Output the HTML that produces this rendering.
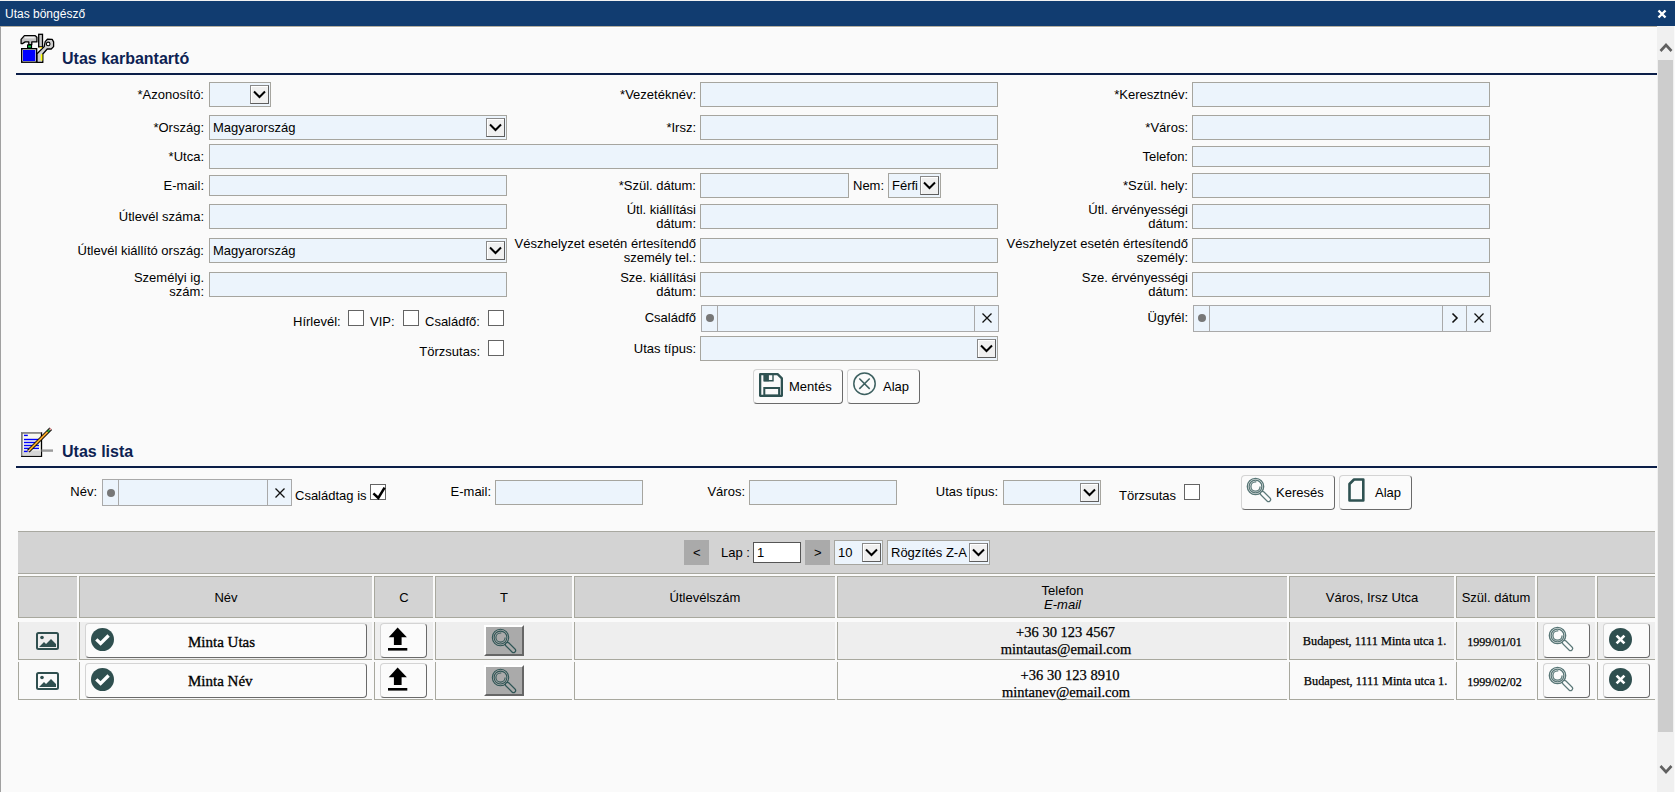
<!DOCTYPE html><html><head><meta charset="utf-8"><title>Utas böngésző</title><style>
*{margin:0;padding:0;box-sizing:border-box}
html,body{width:1675px;height:792px;overflow:hidden;background:#fafafa;font-family:'Liberation Sans', sans-serif;color:#000}
div{position:absolute}
.lb{font-size:13px;line-height:14px;text-align:right;white-space:nowrap}
.tx{font-size:13px;line-height:14px;white-space:nowrap}
.in{border:1px solid #a6a59f;background:#ecf4fc}
.sel .sv{position:absolute;left:3px;top:50%;margin-top:-7px;font-size:13px;line-height:14px}
.ab{right:1px;top:2px;border:1px solid;border-color:#8a8a8a #5e5e5e #5e5e5e #8a8a8a;background:#f0f0f0;box-shadow:inset 1px 1px 0 #fff}
.cb{width:16px;height:16px;border:1px solid #646464;background:#fff}
.lk-dot{left:4px;width:8px;height:8px;border-radius:50%;background:#777}
.lk-sep{top:0;bottom:0;width:1px;background:#a9a9a9}
.btn{border:1px solid;border-color:#d4d4d4 #6a6a6a #6a6a6a #d4d4d4;border-radius:4px;background:#fbfbfb}
.th{background:#d3d3d3;border:1px solid #a8a89e;border-right:none;padding-top:1px;font-size:13px;line-height:14px;text-align:center;display:flex;align-items:center;justify-content:center;flex-direction:column}
.td{border-left:1px solid #a8a89e;border-bottom:1px solid #a8a89e;font-family:'Liberation Serif', serif;-webkit-text-stroke:0.25px #000;text-align:center;display:flex;align-items:center;justify-content:center;flex-direction:column}
</style></head><body>
<div class="" style="left:0px;top:0px;width:1675px;height:1px;background:#f2f2f2"></div>
<div class="" style="left:0px;top:1px;width:1675px;height:25px;background:#113c70"></div>
<div style="left:5px;top:7px;font-size:12px;line-height:14px;color:#fff">Utas böngésző</div>
<svg style="position:absolute;left:1657px;top:9px" width="10" height="10" viewBox="0 0 10 10"><path d="M1.5 1.5 L8.5 8.5 M8.5 1.5 L1.5 8.5" stroke="#fff" stroke-width="2.4"/></svg>
<div class="" style="left:0px;top:26px;width:1657px;height:1px;background:#b4ae9f"></div>
<div class="" style="left:1px;top:27px;width:1656px;height:1px;background:#ffffff"></div>
<div class="" style="left:0px;top:26px;width:1px;height:766px;background:#a0a0a0"></div>
<div class="" style="left:1657px;top:26px;width:17px;height:766px;background:#f0f0f0"></div>
<div class="" style="left:1658px;top:60px;width:15px;height:672px;background:#cdcdcd"></div>
<svg style="position:absolute;left:1659px;top:41px" width="14" height="12" viewBox="0 0 14 12"><path d="M1.5 10 L7 4 L12.5 10" fill="none" stroke="#606060" stroke-width="2.6"/></svg>
<svg style="position:absolute;left:1659px;top:764px" width="14" height="12" viewBox="0 0 14 12"><path d="M1.5 2 L7 8 L12.5 2" fill="none" stroke="#606060" stroke-width="2.6"/></svg>
<svg style="position:absolute;left:20px;top:33px" width="36" height="32" viewBox="0 0 36 32">
<path d="M4.4 2.6 H15.2 L16.9 4.3 V8.9 H11.8 V11.6 H8.8 V8.9 H5.2 L2.4 10.6 H1.1 V6.4 Z" fill="#c4c4c4" stroke="#000" stroke-width="1.3" stroke-linejoin="round"/>
<rect x="4.6" y="3.8" width="10" height="1.6" fill="#efefef"/>
<rect x="7.6" y="12" width="3.9" height="3" fill="#00e040" stroke="#000" stroke-width="1.2"/>
<rect x="1.7" y="15.7" width="14.9" height="13.5" fill="#fff" stroke="#000" stroke-width="1.4"/>
<rect x="3" y="17" width="12.3" height="11" fill="#0000ff"/>
<path d="M17 29.4 V20.8 L24.2 13.6 L25.2 8.6 L27.4 6.2 L32.2 6.4 L33.6 8.8 V13.6 L31.2 16 L27.2 16 L22.8 21 V29.4 Z" fill="#d0d0d0" stroke="#000" stroke-width="1.3" stroke-linejoin="round"/>
<rect x="18.7" y="1.3" width="3.8" height="12.6" fill="#c8c8c8" stroke="#000" stroke-width="1.3"/>
<rect x="19.6" y="14" width="2.2" height="1.4" fill="#ffe000"/>
<circle cx="28.2" cy="10.9" r="1.8" fill="#fff" stroke="#000" stroke-width="1.1"/>
<rect x="20.8" y="21.2" width="1.6" height="6.4" fill="#ffff00"/>
</svg>
<div style="left:62px;top:50px;font-size:16px;line-height:18px;font-weight:bold;color:#0d2252">Utas karbantartó</div>
<div class="" style="left:16px;top:73px;width:1641px;height:2px;background:#0b1e48"></div>
<div class="lb" style="left:-96px;width:300px;top:87.5px;">*Azonosító:</div>
<div class="in sel" style="left:209px;top:82px;width:62px;height:25px;"><span class="sv"></span><div class="ab" style="width:19px;height:19px"><svg width="13" height="9" viewBox="0 0 13 9" style="position:absolute;left:2px;top:4px"><path d="M1 1.5 L6.5 7 L12 1.5" fill="none" stroke="#000" stroke-width="2"/></svg></div></div>
<div class="lb" style="left:396px;width:300px;top:87.5px;">*Vezetéknév:</div>
<div class="in" style="left:700px;top:82px;width:298px;height:25px;"></div>
<div class="lb" style="left:888px;width:300px;top:87.5px;">*Keresztnév:</div>
<div class="in" style="left:1192px;top:82px;width:298px;height:25px;"></div>
<div class="lb" style="left:-96px;width:300px;top:120.5px;">*Ország:</div>
<div class="in sel" style="left:209px;top:115px;width:298px;height:25px;"><span class="sv">Magyarország</span><div class="ab" style="width:19px;height:19px"><svg width="13" height="9" viewBox="0 0 13 9" style="position:absolute;left:2px;top:4px"><path d="M1 1.5 L6.5 7 L12 1.5" fill="none" stroke="#000" stroke-width="2"/></svg></div></div>
<div class="lb" style="left:396px;width:300px;top:120.5px;">*Irsz:</div>
<div class="in" style="left:700px;top:115px;width:298px;height:25px;"></div>
<div class="lb" style="left:888px;width:300px;top:120.5px;">*Város:</div>
<div class="in" style="left:1192px;top:115px;width:298px;height:25px;"></div>
<div class="lb" style="left:-96px;width:300px;top:149.5px;">*Utca:</div>
<div class="in" style="left:209px;top:144px;width:789px;height:25px;"></div>
<div class="lb" style="left:888px;width:300px;top:149.5px;">Telefon:</div>
<div class="in" style="left:1192px;top:146px;width:298px;height:21px;"></div>
<div class="lb" style="left:-96px;width:300px;top:178.5px;">E-mail:</div>
<div class="in" style="left:209px;top:175px;width:298px;height:21px;"></div>
<div class="lb" style="left:396px;width:300px;top:178.5px;">*Szül. dátum:</div>
<div class="in" style="left:700px;top:173px;width:149px;height:25px;"></div>
<div class="tx" style="left:853px;top:179px;">Nem:</div>
<div class="in sel" style="left:888px;top:173px;width:53px;height:25px;"><span class="sv">Férfi</span><div class="ab" style="width:19px;height:19px"><svg width="13" height="9" viewBox="0 0 13 9" style="position:absolute;left:2px;top:4px"><path d="M1 1.5 L6.5 7 L12 1.5" fill="none" stroke="#000" stroke-width="2"/></svg></div></div>
<div class="lb" style="left:888px;width:300px;top:178.5px;">*Szül. hely:</div>
<div class="in" style="left:1192px;top:173px;width:298px;height:25px;"></div>
<div class="lb" style="left:-96px;width:300px;top:209.5px;">Útlevél száma:</div>
<div class="in" style="left:209px;top:204px;width:298px;height:25px;"></div>
<div class="lb" style="left:396px;width:300px;top:203.0px;">Útl. kiállítási<br>dátum:</div>
<div class="in" style="left:700px;top:204px;width:298px;height:25px;"></div>
<div class="lb" style="left:888px;width:300px;top:203.0px;">Útl. érvényességi<br>dátum:</div>
<div class="in" style="left:1192px;top:204px;width:298px;height:25px;"></div>
<div class="lb" style="left:-96px;width:300px;top:243.5px;">Útlevél kiállító ország:</div>
<div class="in sel" style="left:209px;top:238px;width:298px;height:25px;"><span class="sv">Magyarország</span><div class="ab" style="width:19px;height:19px"><svg width="13" height="9" viewBox="0 0 13 9" style="position:absolute;left:2px;top:4px"><path d="M1 1.5 L6.5 7 L12 1.5" fill="none" stroke="#000" stroke-width="2"/></svg></div></div>
<div class="lb" style="left:396px;width:300px;top:237.0px;">Vészhelyzet esetén értesítendő<br>személy tel.:</div>
<div class="in" style="left:700px;top:238px;width:298px;height:25px;"></div>
<div class="lb" style="left:888px;width:300px;top:237.0px;">Vészhelyzet esetén értesítendő<br>személy:</div>
<div class="in" style="left:1192px;top:238px;width:298px;height:25px;"></div>
<div class="lb" style="left:-96px;width:300px;top:271.0px;">Személyi ig.<br>szám:</div>
<div class="in" style="left:209px;top:272px;width:298px;height:25px;"></div>
<div class="lb" style="left:396px;width:300px;top:271.0px;">Sze. kiállítási<br>dátum:</div>
<div class="in" style="left:700px;top:272px;width:298px;height:25px;"></div>
<div class="lb" style="left:888px;width:300px;top:271.0px;">Sze. érvényességi<br>dátum:</div>
<div class="in" style="left:1192px;top:272px;width:298px;height:25px;"></div>
<div class="tx" style="left:293px;top:315px;">Hírlevél:</div>
<div class="cb" style="left:348px;top:310px"></div>
<div class="tx" style="left:370px;top:315px;">VIP:</div>
<div class="cb" style="left:403px;top:310px"></div>
<div class="tx" style="left:425px;top:315px;">Családfő:</div>
<div class="cb" style="left:488px;top:310px"></div>
<div class="lb" style="left:396px;width:300px;top:310.5px;">Családfő</div>
<div class="in lk" style="left:701px;top:305px;width:298px;height:27px;border-color:#a9a9a9"><div class="lk-dot" style="top:8px"></div><div class="lk-sep" style="left:15px"></div><div class="lk-sep" style="left:272px"></div><svg width="12" height="12" viewBox="0 0 12 12" style="position:absolute;left:279px;top:6px"><path d="M1.5 1.5 L10.5 10.5 M10.5 1.5 L1.5 10.5" fill="none" stroke="#111" stroke-width="1.3"/></svg></div>
<div class="lb" style="left:888px;width:300px;top:310.5px;">Ügyfél:</div>
<div class="in lk" style="left:1193px;top:305px;width:298px;height:27px;border-color:#a9a9a9"><div class="lk-dot" style="top:8px"></div><div class="lk-sep" style="left:15px"></div><div class="lk-sep" style="left:248px"></div><svg width="10" height="12" viewBox="0 0 10 12" style="position:absolute;left:256px;top:6px"><path d="M2.5 1.5 L7 6 L2.5 10.5" fill="none" stroke="#111" stroke-width="1.6"/></svg><div class="lk-sep" style="left:272px"></div><svg width="12" height="12" viewBox="0 0 12 12" style="position:absolute;left:279px;top:6px"><path d="M1.5 1.5 L10.5 10.5 M10.5 1.5 L1.5 10.5" fill="none" stroke="#111" stroke-width="1.3"/></svg></div>
<div class="lb" style="left:180px;width:300px;top:344.5px;">Törzsutas:</div>
<div class="cb" style="left:488px;top:340px"></div>
<div class="lb" style="left:396px;width:300px;top:341.5px;">Utas típus:</div>
<div class="in sel" style="left:700px;top:336px;width:298px;height:25px;"><span class="sv"></span><div class="ab" style="width:19px;height:19px"><svg width="13" height="9" viewBox="0 0 13 9" style="position:absolute;left:2px;top:4px"><path d="M1 1.5 L6.5 7 L12 1.5" fill="none" stroke="#000" stroke-width="2"/></svg></div></div>
<div class="btn" style="left:753px;top:369px;width:90px;height:35px;"><div style="left:5px;top:3px;width:24px;height:24px"><svg width="24" height="24" viewBox="0 0 24 24"><path d="M1.15 1.15 H18.6 L22.85 5.4 V22.85 H1.15 Z" fill="none" stroke="#2f5252" stroke-width="2.3" stroke-linejoin="round"/><path d="M5.3 1 V7.8 H14 V1" fill="none" stroke="#2f5252" stroke-width="1.4"/><rect x="4.6" y="1" width="5.3" height="7.3" fill="#2f5252"/><rect x="5.3" y="15" width="14.8" height="7.5" fill="none" stroke="#2f5252" stroke-width="2"/></svg></div><div class="tx" style="left:35px;top:10px">Mentés</div></div>
<div class="btn" style="left:847px;top:369px;width:73px;height:35px;"><div style="left:5px;top:2px;width:24px;height:24px"><svg width="24" height="24" viewBox="0 0 24 24"><circle cx="11.5" cy="11.7" r="10.7" fill="none" stroke="#3d6060" stroke-width="1.5"/><path d="M6.3 6.5 L16.7 16.9 M16.7 6.5 L6.3 16.9" stroke="#3d6060" stroke-width="1.5"/></svg></div><div class="tx" style="left:35px;top:10px">Alap</div></div>
<svg style="position:absolute;left:20px;top:426px" width="36" height="32" viewBox="0 0 36 32">
<rect x="1.7" y="6.7" width="19.8" height="23.6" fill="#f8f8f0" stroke="#000" stroke-width="1.3"/>
<path d="M1.1 6.7 H21.5 M1.7 6.2 V30" stroke="#8a8a8a" stroke-width="1.2"/>
<rect x="2.4" y="24.5" width="18.4" height="5.2" fill="#d6d6d6"/>
<rect x="21.5" y="23.4" width="11.5" height="2.4" fill="#9a9a9a"/>
<g fill="#0000ff"><rect x="4" y="8.7" width="3.8" height="1.4"/><rect x="4" y="12.8" width="15" height="1.4"/><rect x="4" y="15.8" width="15" height="1.4"/><rect x="4" y="18.8" width="15" height="1.4"/><rect x="4" y="21.7" width="15" height="1.4"/><rect x="4" y="24.7" width="3.6" height="1.4"/></g>
<path d="M8.3 25.2 L30.8 2.7" stroke="#000" stroke-width="3.6"/>
<path d="M9.6 23.9 L27.6 5.9" stroke="#f4a82a" stroke-width="2"/>
<path d="M27.6 5.9 L29.6 3.9" stroke="#30a040" stroke-width="2"/>
<path d="M29.6 3.9 L31 2.5" stroke="#e8a0a0" stroke-width="2"/>
<path d="M8.3 25.2 L9.8 23.7" stroke="#f0c8b0" stroke-width="1.6"/>
</svg>
<div style="left:62px;top:443px;font-size:16px;line-height:18px;font-weight:bold;color:#0d2252">Utas lista</div>
<div class="" style="left:16px;top:466px;width:1641px;height:2px;background:#0b1e48"></div>
<div class="lb" style="left:-203px;width:300px;top:484.5px;">Név:</div>
<div class="in lk" style="left:102px;top:479px;width:190px;height:27px;border-color:#a9a9a9"><div class="lk-dot" style="top:9px"></div><div class="lk-sep" style="left:15px"></div><div class="lk-sep" style="left:164px"></div><svg width="12" height="12" viewBox="0 0 12 12" style="position:absolute;left:171px;top:7px"><path d="M1.5 1.5 L10.5 10.5 M10.5 1.5 L1.5 10.5" fill="none" stroke="#111" stroke-width="1.3"/></svg></div>
<div class="tx" style="left:295px;top:489px;">Családtag is</div>
<div class="cb" style="left:370px;top:484px"><svg width="16" height="16" viewBox="0 0 16 16" style="position:absolute;left:-1px;top:-1px"><path d="M3.4 9.3 L8.3 14 L14.6 3.6" fill="none" stroke="#000" stroke-width="2.5"/></svg></div>
<div class="lb" style="left:191px;width:300px;top:484.5px;">E-mail:</div>
<div class="in" style="left:495px;top:480px;width:148px;height:25px;"></div>
<div class="lb" style="left:445px;width:300px;top:484.5px;">Város:</div>
<div class="in" style="left:749px;top:480px;width:148px;height:25px;"></div>
<div class="lb" style="left:698px;width:300px;top:484.5px;">Utas típus:</div>
<div class="in sel" style="left:1003px;top:480px;width:98px;height:25px;"><span class="sv"></span><div class="ab" style="width:19px;height:19px"><svg width="13" height="9" viewBox="0 0 13 9" style="position:absolute;left:2px;top:4px"><path d="M1 1.5 L6.5 7 L12 1.5" fill="none" stroke="#000" stroke-width="2"/></svg></div></div>
<div class="tx" style="left:1119px;top:489px;">Törzsutas</div>
<div class="cb" style="left:1184px;top:484px"></div>
<div class="btn" style="left:1241px;top:475px;width:94px;height:35px;"><div style="left:4px;top:1px;width:24px;height:24px"><svg width="27" height="27" viewBox="0 0 27 27"><g fill="none" stroke="#587676" stroke-width="1.3"><circle cx="9.5" cy="9.5" r="8.2"/><circle cx="9.5" cy="9.5" r="6.4"/><circle cx="9.5" cy="9.5" r="4.6" stroke-dasharray="22 8"/></g><path d="M16.5 16.5 L22.5 22.5" stroke="#5b7878" stroke-width="5.4" stroke-linecap="round"/><path d="M16.5 16.5 L22.5 22.5" stroke="#fbfbfb" stroke-width="3" stroke-linecap="round"/></svg></div><div class="tx" style="left:34px;top:10px">Keresés</div></div>
<div class="btn" style="left:1339px;top:475px;width:73px;height:35px;"><div style="left:5px;top:2px;width:24px;height:24px"><svg width="24" height="24" viewBox="0 0 24 24"><path d="M9 1.5 H18.3 V22.5 H4.5 V6 Z" fill="none" stroke="#2f5252" stroke-width="2.6" stroke-linejoin="round"/></svg></div><div class="tx" style="left:35px;top:10px">Alap</div></div>
<div class="" style="left:18px;top:531px;width:1637px;height:43px;background:#d3d3d3;border-top:1px solid #a8a8a0;border-bottom:1px solid #a8a8a0"></div>
<div class="" style="left:684px;top:540px;width:25px;height:25px;background:#aaaaaa"><div class="tx" style="left:9px;top:6px">&lt;</div></div>
<div class="tx" style="left:721px;top:546px;">Lap :</div>
<div class="" style="left:753px;top:542px;width:48px;height:21px;background:#fff;border:1px solid #555"><div class="tx" style="left:3px;top:3px">1</div></div>
<div class="" style="left:805px;top:540px;width:25px;height:25px;background:#aaaaaa"><div class="tx" style="left:9px;top:6px">&gt;</div></div>
<div class="in sel" style="left:834px;top:540px;width:49px;height:25px;"><span class="sv">10</span><div class="ab" style="width:19px;height:19px"><svg width="13" height="9" viewBox="0 0 13 9" style="position:absolute;left:2px;top:4px"><path d="M1 1.5 L6.5 7 L12 1.5" fill="none" stroke="#000" stroke-width="2"/></svg></div></div>
<div class="in sel" style="left:887px;top:540px;width:103px;height:25px;"><span class="sv">Rögzítés Z-A</span><div class="ab" style="width:19px;height:19px"><svg width="13" height="9" viewBox="0 0 13 9" style="position:absolute;left:2px;top:4px"><path d="M1 1.5 L6.5 7 L12 1.5" fill="none" stroke="#000" stroke-width="2"/></svg></div></div>
<div class="th" style="left:18px;top:576px;width:59px;height:42px;"></div>
<div class="th" style="left:79px;top:576px;width:293px;height:42px;">Név</div>
<div class="th" style="left:374px;top:576px;width:59px;height:42px;">C</div>
<div class="th" style="left:435px;top:576px;width:137px;height:42px;">T</div>
<div class="th" style="left:574px;top:576px;width:261px;height:42px;">Útlevélszám</div>
<div class="th" style="left:837px;top:576px;width:450px;height:42px;">Telefon<br><i>E-mail</i></div>
<div class="th" style="left:1289px;top:576px;width:165px;height:42px;">Város, Irsz Utca</div>
<div class="th" style="left:1456px;top:576px;width:79px;height:42px;">Szül. dátum</div>
<div class="th" style="left:1537px;top:576px;width:58px;height:42px;"></div>
<div class="th" style="left:1597px;top:576px;width:58px;height:42px;"></div>
<div class="td" style="left:18px;top:622px;width:59px;height:38px;background:#eeeeee"><div style="left:17px;top:10px"><svg width="23" height="18" viewBox="0 0 23 18"><rect x="1" y="1" width="21" height="16" rx="1.5" fill="none" stroke="#2f4f4f" stroke-width="2"/><circle cx="6" cy="5.5" r="1.8" fill="#2f4f4f"/><path d="M3 15 L8 10 L10 12 L15 7 L20 12 V15 Z" fill="#2f4f4f"/></svg></div></div>
<div class="td" style="left:79px;top:622px;width:293px;height:38px;background:#eeeeee"></div>
<div class="td" style="left:374px;top:622px;width:59px;height:38px;background:#eeeeee"></div>
<div class="td" style="left:435px;top:622px;width:137px;height:38px;background:#eeeeee"></div>
<div class="td" style="left:574px;top:622px;width:261px;height:38px;background:#eeeeee"></div>
<div class="td" style="left:837px;top:622px;width:450px;height:38px;background:#eeeeee"><div style="position:static;font-size:14.5px;line-height:17px;margin-top:0px"><div style="position:static;margin-left:6px">+36 30 123 4567</div><div style="position:static;margin-left:7px">mintautas@email.com</div></div></div>
<div class="td" style="left:1289px;top:622px;width:165px;height:38px;background:#eeeeee"><div style="position:static;font-size:12.3px;line-height:14px;margin-top:0px;margin-left:5px">Budapest, 1111 Minta utca 1.</div></div>
<div class="td" style="left:1456px;top:622px;width:79px;height:38px;background:#eeeeee"><div style="position:static;font-size:12px;line-height:14px;margin-top:2px;margin-left:-3px">1999/01/01</div></div>
<div class="td" style="left:1537px;top:622px;width:58px;height:38px;background:#eeeeee"></div>
<div class="td" style="left:1597px;top:622px;width:58px;height:38px;background:#eeeeee"></div>
<div class="btn" style="left:85px;top:623px;width:282px;height:35px;"><div style="left:5px;top:4px"><svg width="23" height="23" viewBox="0 0 23 23"><circle cx="11.5" cy="11.5" r="11.5" fill="#2f4f4f"/><path d="M5.3 11.4 L9.6 15.5 L17.6 7.5" fill="none" stroke="#fff" stroke-width="3.3"/></svg></div><div style="left:102px;top:9px;font-family:'Liberation Serif', serif;font-size:15px;line-height:18px;white-space:nowrap;-webkit-text-stroke:0.3px #000">Minta Utas</div></div>
<div class="btn" style="left:380px;top:623px;width:47px;height:35px;"><div style="left:7px;top:3px"><svg width="22" height="25" viewBox="0 0 22 25"><path d="M9.6 0.5 L18.9 10.2 H13.6 V18.1 H5.9 V10.2 H0.75 Z" fill="#000"/><rect x="0" y="21" width="19.3" height="2.6" fill="#000"/></svg></div></div>
<div class="" style="left:484px;top:625px;width:40px;height:31px;background:#aaaaaa;border:2px solid;border-color:#fff #666 #666 #fff"><div style="left:5px;top:1px"><svg width="27" height="27" viewBox="0 0 27 27"><g fill="none" stroke="#2f5555" stroke-width="1.05"><circle cx="9.5" cy="9.5" r="8.2"/><circle cx="9.5" cy="9.5" r="6.4"/><circle cx="9.5" cy="9.5" r="4.6" stroke-dasharray="22 8"/></g><path d="M16.5 16.5 L22.5 22.5" stroke="#2f5555" stroke-width="5.4" stroke-linecap="round"/><path d="M16.5 16.5 L22.5 22.5" stroke="#aaaaaa" stroke-width="3" stroke-linecap="round"/></svg></div></div>
<div class="btn" style="left:1543px;top:623px;width:47px;height:35px;"><div style="left:4px;top:2px"><svg width="27" height="27" viewBox="0 0 27 27"><g fill="none" stroke="#587676" stroke-width="1.3"><circle cx="9.5" cy="9.5" r="8.2"/><circle cx="9.5" cy="9.5" r="6.4"/><circle cx="9.5" cy="9.5" r="4.6" stroke-dasharray="22 8"/></g><path d="M16.5 16.5 L22.5 22.5" stroke="#5b7878" stroke-width="5.4" stroke-linecap="round"/><path d="M16.5 16.5 L22.5 22.5" stroke="#fbfbfb" stroke-width="3" stroke-linecap="round"/></svg></div></div>
<div class="btn" style="left:1603px;top:623px;width:47px;height:35px;"><div style="left:5px;top:4px"><svg width="23" height="23" viewBox="0 0 23 23"><circle cx="11.5" cy="11.5" r="11.5" fill="#2f4f4f"/><path d="M7.6 7.6 L15.4 15.4 M15.4 7.6 L7.6 15.4" stroke="#fff" stroke-width="2.7"/></svg></div></div>
<div class="td" style="left:18px;top:662px;width:59px;height:38px;background:#fafafa"><div style="left:17px;top:10px"><svg width="23" height="18" viewBox="0 0 23 18"><rect x="1" y="1" width="21" height="16" rx="1.5" fill="none" stroke="#2f4f4f" stroke-width="2"/><circle cx="6" cy="5.5" r="1.8" fill="#2f4f4f"/><path d="M3 15 L8 10 L10 12 L15 7 L20 12 V15 Z" fill="#2f4f4f"/></svg></div></div>
<div class="td" style="left:79px;top:662px;width:293px;height:38px;background:#fafafa"></div>
<div class="td" style="left:374px;top:662px;width:59px;height:38px;background:#fafafa"></div>
<div class="td" style="left:435px;top:662px;width:137px;height:38px;background:#fafafa"></div>
<div class="td" style="left:574px;top:662px;width:261px;height:38px;background:#fafafa"></div>
<div class="td" style="left:837px;top:662px;width:450px;height:38px;background:#fafafa"><div style="position:static;font-size:14.5px;line-height:17px;margin-top:6px"><div style="position:static;margin-left:15px">+36 30 123 8910</div><div style="position:static;margin-left:7px">mintanev@email.com</div></div></div>
<div class="td" style="left:1289px;top:662px;width:165px;height:38px;background:#fafafa"><div style="position:static;font-size:12.3px;line-height:14px;margin-top:0px;margin-left:7px">Budapest, 1111 Minta utca 1.</div></div>
<div class="td" style="left:1456px;top:662px;width:79px;height:38px;background:#fafafa"><div style="position:static;font-size:12px;line-height:14px;margin-top:2px;margin-left:-3px">1999/02/02</div></div>
<div class="td" style="left:1537px;top:662px;width:58px;height:38px;background:#fafafa"></div>
<div class="td" style="left:1597px;top:662px;width:58px;height:38px;background:#fafafa"></div>
<div class="btn" style="left:85px;top:663px;width:282px;height:35px;"><div style="left:5px;top:4px"><svg width="23" height="23" viewBox="0 0 23 23"><circle cx="11.5" cy="11.5" r="11.5" fill="#2f4f4f"/><path d="M5.3 11.4 L9.6 15.5 L17.6 7.5" fill="none" stroke="#fff" stroke-width="3.3"/></svg></div><div style="left:102px;top:8px;font-family:'Liberation Serif', serif;font-size:15px;line-height:18px;white-space:nowrap;-webkit-text-stroke:0.3px #000">Minta Név</div></div>
<div class="btn" style="left:380px;top:663px;width:47px;height:35px;"><div style="left:7px;top:3px"><svg width="22" height="25" viewBox="0 0 22 25"><path d="M9.6 0.5 L18.9 10.2 H13.6 V18.1 H5.9 V10.2 H0.75 Z" fill="#000"/><rect x="0" y="21" width="19.3" height="2.6" fill="#000"/></svg></div></div>
<div class="" style="left:484px;top:665px;width:40px;height:31px;background:#aaaaaa;border:2px solid;border-color:#fff #666 #666 #fff"><div style="left:5px;top:1px"><svg width="27" height="27" viewBox="0 0 27 27"><g fill="none" stroke="#2f5555" stroke-width="1.05"><circle cx="9.5" cy="9.5" r="8.2"/><circle cx="9.5" cy="9.5" r="6.4"/><circle cx="9.5" cy="9.5" r="4.6" stroke-dasharray="22 8"/></g><path d="M16.5 16.5 L22.5 22.5" stroke="#2f5555" stroke-width="5.4" stroke-linecap="round"/><path d="M16.5 16.5 L22.5 22.5" stroke="#aaaaaa" stroke-width="3" stroke-linecap="round"/></svg></div></div>
<div class="btn" style="left:1543px;top:663px;width:47px;height:35px;"><div style="left:4px;top:2px"><svg width="27" height="27" viewBox="0 0 27 27"><g fill="none" stroke="#587676" stroke-width="1.3"><circle cx="9.5" cy="9.5" r="8.2"/><circle cx="9.5" cy="9.5" r="6.4"/><circle cx="9.5" cy="9.5" r="4.6" stroke-dasharray="22 8"/></g><path d="M16.5 16.5 L22.5 22.5" stroke="#5b7878" stroke-width="5.4" stroke-linecap="round"/><path d="M16.5 16.5 L22.5 22.5" stroke="#fbfbfb" stroke-width="3" stroke-linecap="round"/></svg></div></div>
<div class="btn" style="left:1603px;top:663px;width:47px;height:35px;"><div style="left:5px;top:4px"><svg width="23" height="23" viewBox="0 0 23 23"><circle cx="11.5" cy="11.5" r="11.5" fill="#2f4f4f"/><path d="M7.6 7.6 L15.4 15.4 M15.4 7.6 L7.6 15.4" stroke="#fff" stroke-width="2.7"/></svg></div></div>
</body></html>
